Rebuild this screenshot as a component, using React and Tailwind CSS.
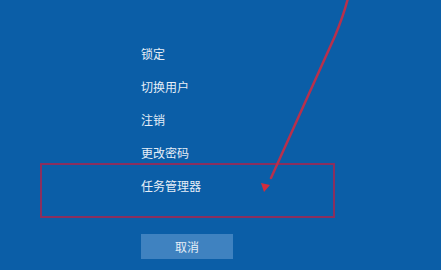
export default function App() {
  const items = ["锁定", "切换用户", "注销", "更改密码", "任务管理器"];
  return (
    <div
      className="relative w-[441px] h-[270px] overflow-hidden bg-[#0b5ea7] text-[#e6eef7]"
      style={{ fontFamily: '"Noto Sans CJK SC", "Noto Sans", sans-serif' }}
    >
      <div className="flex flex-col pl-[141px] pt-[37px]">
        {items.map((t) => (
          <div key={t} className="h-[33px] flex items-center text-[12px] leading-none">
            {t}
          </div>
        ))}
        <div className="mt-[32px] w-[92px] h-[25px] bg-[#3f82c0] flex items-center justify-center text-[12px] leading-none">
          取消
        </div>
      </div>
      <div className="absolute left-[40px] top-[163px] w-[295px] h-[55px] border-2 border-[#8a2f5e]" />
      <svg className="absolute inset-0" width="441" height="270" viewBox="0 0 441 270">
        <path
          d="M348 -2 C344 14 340 24 335 36 L271 178"
          fill="none"
          stroke="#b8304c"
          strokeWidth="2.5"
          strokeLinecap="round"
        />
        <path d="M264 192 L261 183 L270 185 Z" fill="#d42c3c" />
      </svg>
    </div>
  );
}
